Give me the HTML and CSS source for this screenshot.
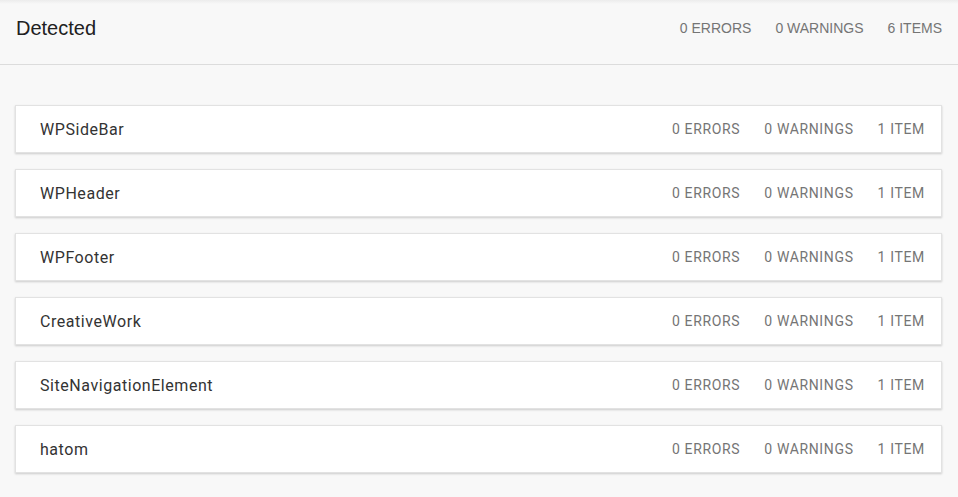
FILE: index.html
```html
<!DOCTYPE html>
<html>
<head>
<meta charset="utf-8">
<link rel="stylesheet" href="styles.css">
</head>
<body>
<header class="top">
  <h1 class="title">Detected</h1>
  <div class="top-stats">
    <span>0 ERRORS</span>
    <span>0 WARNINGS</span>
    <span>6 ITEMS</span>
  </div>
</header>
<main class="list">
  <div class="card"><span class="name">WPSideBar</span><div class="stats"><span>0 ERRORS</span><span>0 WARNINGS</span><span>1 ITEM</span></div></div>
  <div class="card"><span class="name">WPHeader</span><div class="stats"><span>0 ERRORS</span><span>0 WARNINGS</span><span>1 ITEM</span></div></div>
  <div class="card"><span class="name">WPFooter</span><div class="stats"><span>0 ERRORS</span><span>0 WARNINGS</span><span>1 ITEM</span></div></div>
  <div class="card"><span class="name">CreativeWork</span><div class="stats"><span>0 ERRORS</span><span>0 WARNINGS</span><span>1 ITEM</span></div></div>
  <div class="card"><span class="name">SiteNavigationElement</span><div class="stats"><span>0 ERRORS</span><span>0 WARNINGS</span><span>1 ITEM</span></div></div>
  <div class="card"><span class="name">hatom</span><div class="stats"><span>0 ERRORS</span><span>0 WARNINGS</span><span>1 ITEM</span></div></div>
</main>
</body>
</html>
```
FILE: styles.css
```css
html, body {
  margin: 0;
  padding: 0;
  background: #f8f8f8;
  width: 958px;
  height: 497px;
  overflow: hidden;
}
.top {
  box-sizing: border-box;
  height: 65px;
  display: flex;
  justify-content: space-between;
  align-items: flex-start;
  padding: 17px 16px 0 16px;
  border-bottom: 1px solid #dcdcdc;
  background: linear-gradient(#ececec, #f8f8f8 4px);
  font-family: "Liberation Sans", Arial, sans-serif;
}
.title {
  margin: 0;
  font-size: 20px;
  font-weight: normal;
  line-height: 23px;
  color: #212121;
}
.top-stats {
  display: flex;
  gap: 24px;
  font-size: 14px;
  line-height: 23px;
  color: #757575;
}
.list {
  display: flex;
  flex-direction: column;
  gap: 16px;
  padding: 40px 16px 0 15px;
}
.card {
  box-sizing: border-box;
  height: 48px;
  display: flex;
  align-items: center;
  justify-content: space-between;
  padding: 0 16px 0 24px;
  background: #fff;
  border: 1px solid #e2e2e2;
  box-shadow: 0 1px 2px rgba(0,0,0,0.18);
  font-family: Roboto, "Liberation Sans", sans-serif;
  letter-spacing: 0.55px;
}
.name {
  font-size: 16px;
  color: #333;
}
.stats {
  display: flex;
  gap: 24px;
  font-size: 14px;
  letter-spacing: 0.65px;
  color: #757575;
}
```
